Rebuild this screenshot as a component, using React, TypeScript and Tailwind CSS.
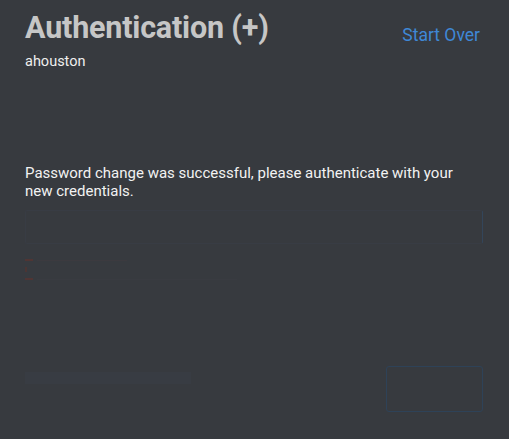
import React from "react";

export default function App() {
  return (
    <div
      className="w-[509px] h-[439px] bg-[#373a3f] overflow-hidden flex flex-col pl-[25px] pr-[26px]"
      style={{ fontFamily: "Roboto, 'Liberation Sans', sans-serif" }}
    >
      <div className="flex justify-between items-start pt-[8px]">
        <h1 className="text-[30.5px] leading-[40px] font-bold text-[#c6c6c6] tracking-[-0.2px]">
          Authentication (+)
        </h1>
        <a className="text-[17.5px] leading-[24px] text-[#3f88d6] mt-[15px] mr-[3px]">Start Over</a>
      </div>
      <div className="text-[14.5px] leading-[18px] text-[#eeeeee] mt-[5px]">ahouston</div>
      <p className="text-[15px] leading-[18px] text-[#f2f2f2] mt-[93px] pr-[20px]">
        Password change was successful, please authenticate with your new credentials.
      </p>
      <div className="mt-[10px] h-[34px] border border-[#383c44] rounded-[2px] border-r-[#33455a]" />
      <div className="mt-[15px] flex flex-col gap-[6px] opacity-30">
        <div className="flex items-center gap-[4px]">
          <span className="w-[8px] h-[2px] bg-[#8a2a1c]" />
          <span className="w-[90px] h-[1px] bg-[#4a3d40]" />
        </div>
        <div className="w-[2px] h-[5px] bg-[#7a2a1c]" />
        <div className="flex items-center gap-[4px]">
          <span className="w-[8px] h-[2px] bg-[#8a2a1c]" />
          <span className="w-[200px] h-[1px] bg-[#3f4046]" />
        </div>
      </div>
      <div className="flex justify-between items-start mt-[86px]">
        <div className="mt-[6px] w-[166px] h-[12px] bg-[#383c43]" />
        <div className="w-[97px] h-[46px] border border-[#2e4258] rounded-[3px]" />
      </div>
    </div>
  );
}
